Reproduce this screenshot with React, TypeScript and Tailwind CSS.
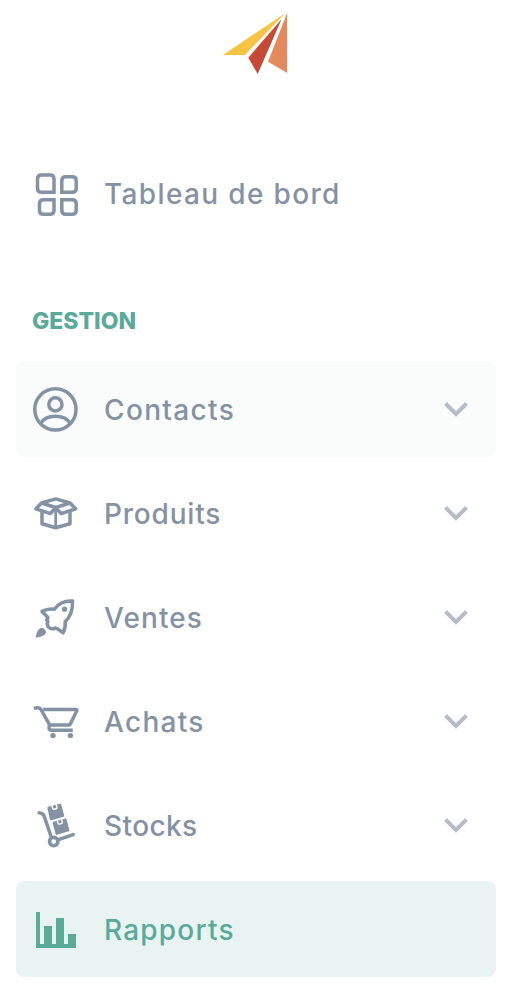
import type { ReactNode } from "react";

function Icon({ children }: { children: ReactNode }) {
  return (
    <svg viewBox="0 0 48 48" className="size-12 shrink-0 overflow-visible" fill="none" stroke="currentColor" strokeWidth="3.5" aria-hidden="true">
      {children}
    </svg>
  );
}

function DashboardIcon() {
  return (
    <Icon>
      <path d="M22 23.3H9.5q-4 0-4-4V10q0-4 4-4H18q4 0 4 4Z" />
      <path d="M29.8 23.3V11.7q0-4 4-4h6.4q4 0 4 4v7.6q0 4-4 4Z" />
      <path d="M22 30.8V41.2q0 4-4 4h-6.5q-4 0-4-4v-6.4q0-4 4-4Z" />
      <path d="M29.8 30.8h10.4q4 0 4 4v6.4q0 4-4 4h-6.4q-4 0-4-4Z" />
    </Icon>
  );
}

function ContactIcon() {
  return (
    <Icon>
      <circle cx="23.4" cy="24.4" r="20.6" />
      <circle cx="23.4" cy="19.4" r="6.6" />
      <path d="M8.8 38.2C14 28.8 32.8 28.8 38 38.2" />
    </Icon>
  );
}

function BoxIcon() {
  return (
    <Icon>
      <g strokeWidth="3.5" strokeLinejoin="round">
        <path d="m9.5 14 14.2-4.1L38 14l-14.3 4.5ZM9.5 14l-5.6 5.8 14.5 4.8 5.3-6.1M38 14l5.6 5.8-14.5 4.8-5.4-6.1" />
        <path d="M10 22v12.8l13.7 4 14.3-4V22" />
        <path d="M23.7 18v20" strokeWidth="2.8" />
      </g>
    </Icon>
  );
}

function RocketIcon() {
  return (
    <Icon>
      <path strokeLinejoin="round" d="M40.6 8.1C32.5 7.6 27 10 22.3 16.2c-4.2-.7-8-.2-12.3 2.2l6 6-1.3 2.4 1.1 1.4c-2 5.6 2.2 9 7.8 6.8l2.7 1.4 4.8 3.4c2-4 2.5-7.1 2.1-11.2C38.3 24 40.8 17.5 40.6 8.1Z" />
      <circle cx="32.6" cy="16.2" r="2.6" fill="currentColor" stroke="none" />
      <path fill="currentColor" stroke="none" d="M3.8 44.8C4.4 39.5 6 36 8.9 35c2.8-.7 5.8 2.3 4.9 5-1 2.8-4.8 3.4-10 4.8Z" />
    </Icon>
  );
}

function CartIcon() {
  return (
    <Icon>
      <path d="M1.8 11.3q5.2-1.6 7 .8l9 16.1" />
      <path strokeLinejoin="round" d="M11.2 12.5H44q1.3 0 .8 1.3l-6.5 13.3q-.5.9-1.3.9H18" />
      <path d="M18 28q-1.5 1.7-1 3.3.5 2 3 2h20.8" />
      <circle cx="21" cy="38.6" r="2.7" fill="currentColor" stroke="none" />
      <circle cx="38.4" cy="38.6" r="2.7" fill="currentColor" stroke="none" />
    </Icon>
  );
}

function StockIcon() {
  return (
    <Icon>
      <path strokeLinecap="round" strokeLinejoin="round" d="M7 11.7c3 .1 4.6 1.3 5.4 4L19.2 36" />
      <path strokeLinecap="round" d="m26.5 38.6 14.7-5" />
      <circle cx="21.7" cy="40.6" r="4.2" strokeWidth="3.6" />
      <g fill="currentColor" strokeWidth="2" strokeLinejoin="round">
        <path d="M16.4 6.8 28.3 3.8 31.2 14.8 18.9 18.2Z" />
        <path d="M21.6 21.7 33.6 18.5 36.4 29.4 24.6 32.9Z" />
      </g>
      <g stroke="#fff" strokeWidth="1.4">
        <path d="m19.9 4.6.9 3q.3.9 1.2.7l2.3-.6q.9-.2.7-1.1l-.8-3" />
        <path d="m25.2 19.4.9 3q.3.9 1.2.7l2.3-.6q.9-.2.7-1.1l-.8-3" />
      </g>
    </Icon>
  );
}

function ReportIcon() {
  return (
    <Icon>
      <path fill="currentColor" stroke="none" d="M4 7h4v32h4V21h8v18h4V13h8v26h4V29h8v14H4Z" />
    </Icon>
  );
}

function Chevron() {
  return (
    <svg viewBox="0 0 24 24" className="mr-3 ml-auto size-6 shrink-0 text-[#b4bcc8]" fill="none" stroke="currentColor" strokeWidth="4" aria-hidden="true">
      <path d="m1.5 6.5 10.5 10.5L22.5 6.5" />
    </svg>
  );
}

interface EntryProps {
  icon: ReactNode;
  label: string;
  tracking: string;
  tone?: string;
  expandable?: boolean;
}

function Entry({ icon, label, tracking, tone = "text-[#8492a4]", expandable = false }: EntryProps) {
  return (
    <a className={`flex h-24 items-center rounded-lg px-4 ${tone}`}>
      {icon}
      <span className={`ml-6 pt-0.5 text-[28px] leading-9 font-medium whitespace-nowrap ${tracking}`}>{label}</span>
      {expandable && <Chevron />}
    </a>
  );
}

export default function App() {
  return (
    <aside className="flex h-[1004px] w-[512px] flex-col bg-white px-4 pt-3 font-['Inter',sans-serif]">
      <svg viewBox="0 0 64 62" className="h-[62px] w-16 shrink-0 self-center overflow-visible" aria-hidden="true">
        <path d="M-1 43 61.5 1 21 43Z" fill="#f6c344" />
        <path d="M57.7 7 24.3 45.7 33.7 62Z" fill="#c74a37" />
        <path d="M63.2.7 44 49.7 63.2 61Z" fill="#e58a5d" />
      </svg>
      <nav className="mt-[71px]">
        <Entry icon={<DashboardIcon />} label="Tableau de bord" tracking="tracking-[1.35px]" />
        <h2 className="mt-[62px] mb-[22px] pl-4 text-[23px] leading-9 font-extrabold tracking-[0px] text-[#5aaa98]">GESTION</h2>
        <div className="flex flex-col gap-2">
          <Entry icon={<ContactIcon />} label="Contacts" tracking="tracking-[1.35px]" tone="bg-[#fafcfb] text-[#8492a4]" expandable />
          <Entry icon={<BoxIcon />} label="Produits" tracking="tracking-[0.8px]" expandable />
          <Entry icon={<RocketIcon />} label="Ventes" tracking="tracking-[1.1px]" expandable />
          <Entry icon={<CartIcon />} label="Achats" tracking="tracking-[1.3px]" expandable />
          <Entry icon={<StockIcon />} label="Stocks" tracking="tracking-[0.4px]" expandable />
          <Entry icon={<ReportIcon />} label="Rapports" tracking="tracking-[1.2px]" tone="bg-[#e9f3f1] text-[#5aaa98]" />
        </div>
      </nav>
    </aside>
  );
}
